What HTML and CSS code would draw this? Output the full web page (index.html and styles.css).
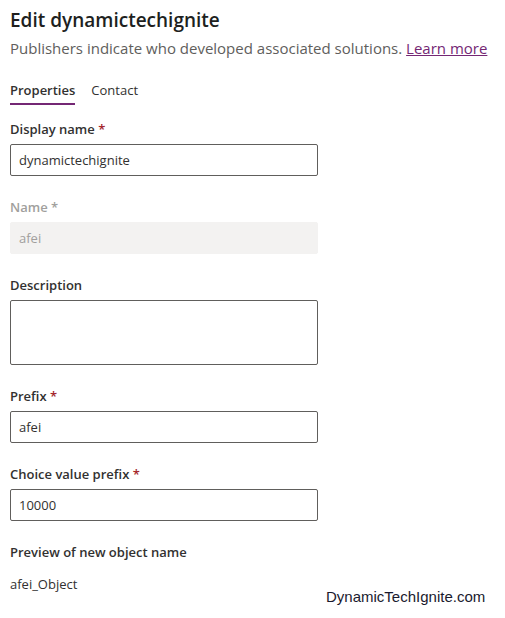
FILE: index.html
```html
<!DOCTYPE html>
<html>
<head>
<meta charset="utf-8">
<link rel="stylesheet" href="styles.css">
</head>
<body>
<div class="panel">
  <h1 class="title">Edit dynamictechignite</h1>
  <p class="subtitle">Publishers indicate who developed associated solutions. <a class="link" href="#">Learn more</a></p>
  <div class="tabs">
    <span class="tab active">Properties</span>
    <span class="tab">Contact</span>
  </div>
  <div class="field">
    <label class="label">Display name <span class="req">*</span></label>
    <div class="input">dynamictechignite</div>
  </div>
  <div class="field disabled">
    <label class="label">Name <span class="req">*</span></label>
    <div class="input">afei</div>
  </div>
  <div class="field">
    <label class="label">Description</label>
    <div class="input textarea"></div>
  </div>
  <div class="field">
    <label class="label">Prefix <span class="req">*</span></label>
    <div class="input">afei</div>
  </div>
  <div class="field">
    <label class="label">Choice value prefix <span class="req">*</span></label>
    <div class="input">10000</div>
  </div>
  <div class="field">
    <label class="label">Preview of new object name</label>
    <div class="preview">afei_Object</div>
  </div>
</div>
<div class="watermark">DynamicTechIgnite.com</div>
</body>
</html>
```
FILE: styles.css
```css
html, body {
  margin: 0;
  padding: 0;
  background: #ffffff;
}
body {
  font-family: "Segoe UI", "Open Sans", "Noto Sans", sans-serif;
  color: #323130;
  position: relative;
  width: 505px;
  height: 618px;
  overflow: hidden;
}
.panel {
  padding: 6px 10px 0 10px;
}
.title {
  margin: 0;
  font-size: 19px;
  font-weight: 600;
  line-height: 28px;
  color: #201f1e;
}
.subtitle {
  margin: 2px 0 0 0;
  font-size: 15px;
  line-height: 24px;
  color: #605e5c;
  white-space: nowrap;
}
.link {
  color: #742774;
  text-decoration: underline;
}
.tabs {
  display: flex;
  gap: 16px;
  margin-top: 20px;
}
.tab {
  font-size: 13px;
  line-height: 20px;
  padding-bottom: 3px;
  color: #323130;
}
.tab.active {
  font-weight: 600;
  border-bottom: 2px solid #742774;
}
.field {
  display: flex;
  flex-direction: column;
  margin-top: 14px;
}
.field + .field {
  margin-top: 21px;
}
.label {
  font-size: 13px;
  font-weight: 600;
  line-height: 20px;
  padding-bottom: 5px;
  color: #323130;
}
.req {
  color: #a4262c;
}
.input {
  box-sizing: border-box;
  width: 308px;
  height: 32px;
  border: 1px solid #605e5c;
  border-radius: 2px;
  padding: 0 8px;
  font-size: 13px;
  line-height: 30px;
  color: #323130;
}
.textarea {
  height: 65px;
}
.disabled .label {
  color: #a19f9d;
}
.disabled .req {
  color: #a19f9d;
}
.disabled .input {
  background: #f3f2f1;
  border-color: #f3f2f1;
  color: #a19f9d;
}
.preview {
  font-size: 13px;
  line-height: 20px;
  padding-top: 7px;
  color: #323130;
}
.watermark {
  position: absolute;
  left: 326px;
  top: 588px;
  font-family: "Liberation Sans", Arial, sans-serif;
  font-size: 15px;
  color: #1a1a2e;
  text-shadow: 0 0 1px #ffffff;
}
```
